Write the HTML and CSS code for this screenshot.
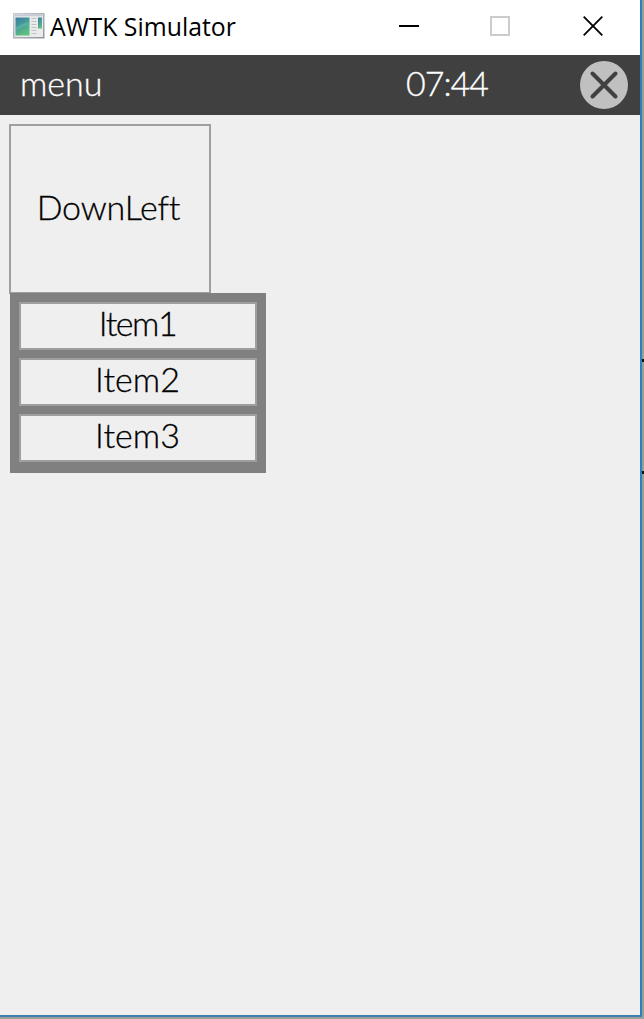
FILE: index.html
```html
<!DOCTYPE html>
<html lang="en">
<head>
<meta charset="utf-8">
<title>AWTK Simulator</title>
<link rel="stylesheet" href="styles.css">
</head>
<body>
<div class="desktop">
  <div class="window">
    <header class="titlebar">
      <svg class="app-icon" width="32" height="26" viewBox="0 0 32 26">
        <defs>
          <linearGradient id="pane" x1="0" y1="0" x2="0.5" y2="1">
            <stop offset="0" stop-color="#3c79a4"/>
            <stop offset="0.5" stop-color="#459c98"/>
            <stop offset="1" stop-color="#5fc07e"/>
          </linearGradient>
          <linearGradient id="frame" x1="0" y1="0" x2="1" y2="1">
            <stop offset="0" stop-color="#c6cad2"/>
            <stop offset="1" stop-color="#92969a"/>
          </linearGradient>
        </defs>
        <rect x="0.75" y="0.75" width="30" height="24" fill="#e9eaec" stroke="url(#frame)" stroke-width="1.5"/>
        <path d="M2 2.5h27.500" stroke="#c4cad6" stroke-width="1.500"/>
        <rect x="2.500" y="4.500" width="14" height="18" fill="url(#pane)"/>
        <path d="M2.500 18q7-5 14-6v-3q-8 1-14 6z" fill="#7cc7b4" opacity="0.35"/>
        <path d="M18.500 5.500h5M18.500 8.500h5M18.500 11.500h5M18.500 14.500h5M18.500 17.500h5M18.500 20.500h5" stroke="#c0c2c5"/>
        <rect x="25" y="4.500" width="4" height="11" fill="url(#pane)"/>
      </svg>
      <span class="title">AWTK Simulator</span>
      <div class="controls">
        <svg width="20" height="20" viewBox="0 0 20 20"><path d="M0 10h20" stroke="#000" stroke-width="2"/></svg>
        <svg width="20" height="20" viewBox="0 0 20 20"><rect x="1" y="1" width="18" height="18" fill="none" stroke="#ccc" stroke-width="2"/></svg>
        <svg width="20" height="20" viewBox="0 0 20 20"><path d="M0.700 0.700l18.600 18.600M19.300 0.700L0.700 19.300" stroke="#000" stroke-width="1.800"/></svg>
      </div>
    </header>
    <div class="appbar">
      <span class="app-name">menu</span>
      <span class="clock">07:44</span>
      <svg class="close" width="48" height="48" viewBox="0 0 48 48">
        <circle cx="24" cy="24" r="24" fill="#c0c0c0"/>
        <path d="M12.500 12.500l23 23M35.500 12.500l-23 23" stroke="#404040" stroke-width="4" stroke-linecap="round"/>
      </svg>
    </div>
    <main class="content">
      <div class="button"><span class="down">DownLeft</span></div>
      <div class="popup">
        <div class="item"><span class="narrow">Item1</span></div>
        <div class="item"><span>Item2</span></div>
        <div class="item"><span>Item3</span></div>
      </div>
    </main>
  </div>
  <i class="mark mark-top"></i>
  <i class="mark mark-bottom"></i>
</div>
</body>
</html>
```
FILE: styles.css
```css
* { box-sizing: border-box; }
body { margin: 0; }
.desktop {
  position: relative;
  width: 644px;
  height: 1019px;
  background: #9a9f9c;
  overflow: hidden;
}
.window {
  width: 642px;
  height: 1017px;
  border-right: 2px solid #2a7fc0;
  border-bottom: 2px solid #3d80ab;
  background: #efefef;
  font: 300 34px/40px Lato, "Open Sans", sans-serif;
  font-variant-ligatures: none;
  color: #000;
  white-space: nowrap;
}
.titlebar {
  display: flex;
  align-items: center;
  height: 55px;
  padding: 0 37px 3px 13px;
  background: #fff;
}
.app-icon { margin-right: 5px; }
.title { font: 400 24.800px/32px "Open Sans", "Noto Sans", sans-serif; }
.controls {
  display: flex;
  gap: 71px;
  margin-left: auto;
}
.controls svg { display: block; }
.controls svg:last-child { margin-left: 2px; }
.appbar {
  display: flex;
  align-items: center;
  height: 60px;
  padding: 0 12px 0 20px;
  background: #404040;
  color: #fff;
}
.app-name {
  width: 386px;
  padding-bottom: 4px;
  -webkit-text-stroke: 0.3px;
}
.clock {
  padding-bottom: 4px;
  letter-spacing: -1px;
  -webkit-text-stroke: 0.3px;
}
.close { margin-left: auto; }
.content {
  padding: 9px;
  -webkit-text-stroke: 0.3px;
}
.button {
  display: flex;
  align-items: center;
  justify-content: center;
  width: 202px;
  height: 170px;
  padding: 0 3px 4px 0;
  border: 2px solid #9f9f9f;
}
.down { letter-spacing: -0.200px; }
.popup {
  position: relative;
  display: flex;
  flex-direction: column;
  gap: 8px;
  width: 256px;
  height: 180px;
  margin: -1px 0 0 1px;
  padding: 9px;
  background: #808080;
}
.item {
  display: flex;
  justify-content: center;
  height: 48px;
  padding-right: 1px;
  border: 2px solid #9f9f9f;
  background: #efefef;
  line-height: 38px;
}
.narrow { letter-spacing: -1.500px; }
.mark {
  position: absolute;
  right: 0;
  width: 2px;
  height: 3px;
  background: #111;
}
.mark-top { top: 359px; }
.mark-bottom { top: 471px; }
```
